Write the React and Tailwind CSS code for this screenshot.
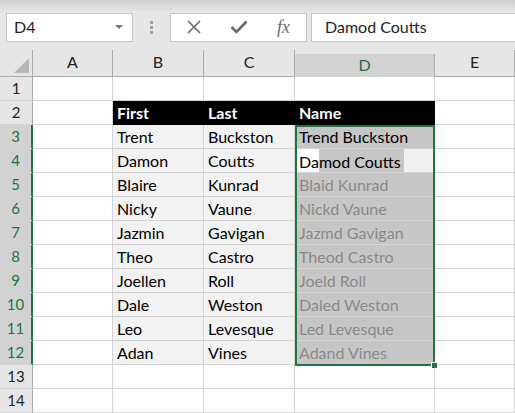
import React from "react";

const cols = ["A", "B", "C", "D", "E"];
const colW = ["w-[80px]", "w-[91px]", "w-[91px]", "w-[140px]", "w-[80px]"];

const people = [
  ["Trent", "Buckston", "Trend Buckston"],
  ["Damon", "Coutts", "Damod Coutts"],
  ["Blaire", "Kunrad", "Blaid Kunrad"],
  ["Nicky", "Vaune", "Nickd Vaune"],
  ["Jazmin", "Gavigan", "Jazmd Gavigan"],
  ["Theo", "Castro", "Theod Castro"],
  ["Joellen", "Roll", "Joeld Roll"],
  ["Dale", "Weston", "Daled Weston"],
  ["Leo", "Levesque", "Led Levesque"],
  ["Adan", "Vines", "Adand Vines"],
];

const Cell = ({ w, className = "", children }) => (
  <div
    className={`${w} h-[24px] shrink-0 border-r border-b border-[#d4d4d4] pl-[4px] pt-[1px] flex items-center overflow-hidden whitespace-nowrap text-[16px] ${className}`}
  >
    {children}
  </div>
);

const RowHead = ({ n, active }) => (
  <div
    className={`w-[33px] h-[24px] shrink-0 flex items-center justify-center border-b border-[#d4d4d4] ${
      active
        ? "bg-[#d2d2d2] text-[#217346] border-r-2 border-r-[#217346]"
        : "bg-[#e6e6e6] text-[#222] border-r border-r-[#ababab]"
    }`}
  >
    {n}
  </div>
);

const App = () => {
  const rows = [];
  for (let r = 1; r <= 14; r++) {
    const p = r >= 3 && r <= 12 ? people[r - 3] : null;
    let b = null;
    let c = null;
    let d = null;
    if (r === 1 || r >= 13) {
      b = <Cell w={colW[1]} className="bg-white" />;
      c = <Cell w={colW[2]} className="bg-white" />;
      d = <Cell w={colW[3]} className="bg-white" />;
    } else if (r === 2) {
      b = (
        <Cell w={colW[1]} className="bg-black border-black text-white font-bold">
          First
        </Cell>
      );
      c = (
        <Cell w={colW[2]} className="bg-black border-black text-white font-bold">
          Last
        </Cell>
      );
      d = (
        <Cell w={colW[3]} className="bg-black border-black text-white font-bold">
          Name
        </Cell>
      );
    } else {
      b = (
        <Cell w={colW[1]} className="bg-[#f2f2f2]">
          {p[0]}
        </Cell>
      );
      c = (
        <Cell w={colW[2]} className="bg-[#f2f2f2]">
          {p[1]}
        </Cell>
      );
      if (r === 3) {
        d = (
          <Cell w={colW[3]} className="bg-[#c6c6c6] text-black">
            {p[2]}
          </Cell>
        );
      } else if (r === 4) {
        d = (
          <div className="w-[140px] h-[24px] shrink-0 border-r border-b border-[#d4d4d4] bg-[#f0f0f0] flex items-stretch whitespace-nowrap relative">
            <div className="w-[24px] bg-white" />
            <div className="w-[85px] bg-[#c6c6c6]" />
            <span className="absolute left-[4px] top-1/2 -translate-y-1/2 mt-[1px] text-black text-[16px]">
              Damod Coutts
            </span>
          </div>
        );
      } else {
        d = (
          <Cell w={colW[3]} className="bg-[#c6c6c6] text-[#8a8a8a]">
            {p[2]}
          </Cell>
        );
      }
    }
    rows.push(
      <div key={r} className="flex">
        <RowHead n={r} active={r >= 3 && r <= 12} />
        <Cell w={colW[0]} className="bg-white" />
        {b}
        {c}
        {d}
        <Cell w={colW[4]} className="bg-white" />
      </div>
    );
  }

  return (
    <div
      className="w-[515px] h-[413px] overflow-hidden bg-[#e6e6e6] text-[15px] text-black relative"
      style={{ fontFamily: "Lato, 'Open Sans', sans-serif" }}
    >
      {/* top strip */}
      <div className="h-[12px] bg-gradient-to-b from-[#d0d0d0] to-[#e6e6e6]" />

      {/* formula bar */}
      <div className="h-[30px] flex items-center">
        <div className="ml-[6px] w-[127px] h-[29px] bg-white border border-[#c6c6c6] flex items-center justify-between pl-[7px] pr-[9px]">
          <span className="text-[16px] text-[#222]">D4</span>
          <span className="w-0 h-0 border-l-[4px] border-r-[4px] border-t-[4px] border-l-transparent border-r-transparent border-t-[#777]" />
        </div>
        <div className="w-[37px] flex flex-col items-center gap-[2px]">
          <span className="w-[3px] h-[3px] bg-[#a0a0a0]" />
          <span className="w-[3px] h-[3px] bg-[#a0a0a0]" />
          <span className="w-[3px] h-[3px] bg-[#a0a0a0]" />
        </div>
        <div className="w-[137px] h-[29px] bg-white border border-[#c6c6c6] flex items-center">
          <div className="w-[45px] flex justify-center">
            <svg width="16" height="16" viewBox="0 0 16 16">
              <path d="M2 2 L14 14 M14 2 L2 14" stroke="#6a6a6a" strokeWidth="1.6" fill="none" />
            </svg>
          </div>
          <div className="w-[45px] flex justify-center">
            <svg width="18" height="16" viewBox="0 0 18 16">
              <path d="M1.5 8 L6.5 13 L16.5 2.5" stroke="#6a6a6a" strokeWidth="2.6" fill="none" />
            </svg>
          </div>
          <div
            className="w-[45px] text-center text-[#6a6a6a] italic text-[18px] leading-none"
            style={{ fontFamily: "'Liberation Serif', serif" }}
          >
            fx
          </div>
        </div>
        <div className="ml-[4px] flex-1 h-[29px] bg-white border border-[#c6c6c6] border-r-0 flex items-center pl-[13px] text-[16px] text-[#222]">
          Damod Coutts
        </div>
      </div>

      <div className="h-[8px]" />

      {/* column headers */}
      <div className="flex h-[27px]">
        <div className="w-[33px] h-[27px] shrink-0 bg-[#e6e6e6] border-r border-b border-[#ababab] relative">
          <svg className="absolute right-[3px] bottom-[3px]" width="15" height="15" viewBox="0 0 15 15">
            <path d="M15 0 L15 15 L0 15 Z" fill="#b8b8b8" />
          </svg>
        </div>
        {cols.map((c, i) => (
          <div
            key={c}
            className={`${colW[i]} h-[27px] shrink-0 flex items-end justify-center pb-[2px] border-r text-[16px] ${
              c === "D"
                ? "bg-[#d2d2d2] border-r-[#ababab] border-b-2 border-b-[#217346] text-[#217346] mt-[4px] h-[23px]"
                : "bg-[#e6e6e6] border-[#ababab] border-b text-[#222]"
            }`}
          >
            {c}
          </div>
        ))}
      </div>

      {rows}

      {/* selection */}
      <div className="absolute left-[295px] top-[125px] w-[140px] h-[241px] border-2 border-[#217346] pointer-events-none" />
      <div className="absolute left-[431px] top-[362px] w-[7px] h-[7px] bg-[#217346] border border-white" />
    </div>
  );
};

export default App;
